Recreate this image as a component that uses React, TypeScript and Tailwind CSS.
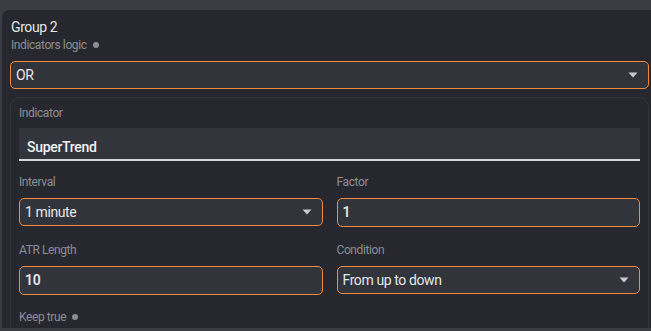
import React from "react"

const Arrow = () => (
  <svg width="10" height="6" viewBox="0 0 10 6" className="shrink-0">
    <path d="M0.5 0.5h9L5 5.5z" fill="#c9cace" />
  </svg>
)

const Dot = () => (
  <span className="ml-[6px] inline-block h-[6px] w-[6px] rounded-full bg-[#8d8e94]" />
)

const Label = ({ text, dot }: { text: string; dot?: boolean }) => (
  <div className="flex h-[16px] items-center text-[12px] leading-[16px] tracking-[-0.4px] text-[#8d8e94]">
    <span>{text}</span>
    {dot && <Dot />}
  </div>
)

const Select = ({ value }: { value: string }) => (
  <div className="flex h-[28px] items-center rounded-[5px] border border-[#f08a3c] bg-[#32343c] pl-[5px] pr-[10px] text-[14px] tracking-[-0.4px] text-[#e6e6e8]">
    <span className="flex-1">{value}</span>
    <Arrow />
  </div>
)

const Input = ({ value }: { value: string }) => (
  <div className="flex h-[29px] items-center rounded-[5px] border border-[#f08a3c] bg-[#32343c] px-[5px] text-[14px] font-semibold tracking-[-0.3px] text-[#e2e4ea]">
    {value}
  </div>
)

const Field = ({
  label,
  children,
}: {
  label: string
  children: React.ReactNode
}) => (
  <div className="flex flex-col gap-[8px]">
    <Label text={label} />
    {children}
  </div>
)

export default function App() {
  return (
    <div
      className="h-[331px] w-[651px] overflow-hidden bg-[#3c3d42] pl-[2px] pt-[10px]"
      style={{ fontFamily: "Roboto, 'Noto Sans', sans-serif" }}
    >
      <div className="h-[318px] w-[660px] overflow-hidden rounded-tl-[8px] bg-[#26272f] pl-[8px] pr-[10px] pt-[7px]">
        <div className="w-[639px]">
          <div className="pl-[1px] text-[14px] leading-[20px] tracking-[-0.4px] text-[#e4e4e6]">
            Group 2
          </div>
          <div className="pl-[1px]">
            <Label text="Indicators logic" dot />
          </div>
          <div className="mt-[8px]">
            <Select value="OR" />
          </div>
          <div className="mt-[8px] rounded-t-[10px] border border-b-0 border-[#33343c] px-[8px] pt-[7px] pb-[20px]">
            <Label text="Indicator" />
            <div className="mt-[7px] flex h-[33px] items-center border-b-2 border-[#d6d6d8] bg-[#33353d] pl-[8px] pt-[8px] text-[14px] font-medium tracking-[-0.3px] text-[#f2f2f4]">
              SuperTrend
            </div>
            <div className="mt-[13px] grid grid-cols-2 gap-x-[14px] gap-y-[15px]">
              <Field label="Interval">
                <Select value="1 minute" />
              </Field>
              <Field label="Factor">
                <Input value="1" />
              </Field>
              <Field label="ATR Length">
                <Input value="10" />
              </Field>
              <Field label="Condition">
                <Select value="From up to down" />
              </Field>
            </div>
            <div className="mt-[14px]">
              <Label text="Keep true" dot />
            </div>
          </div>
        </div>
      </div>
    </div>
  )
}
